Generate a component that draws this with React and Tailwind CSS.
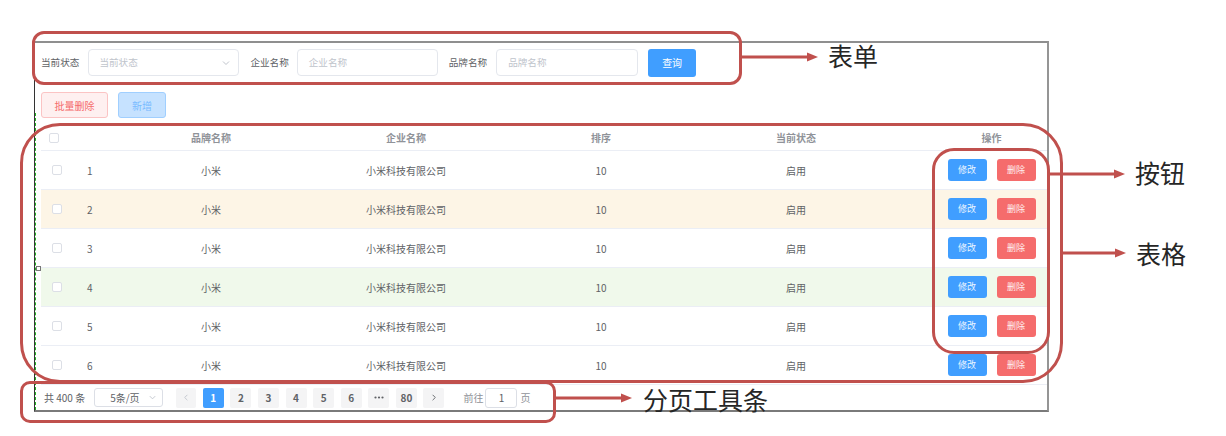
import React from 'react'

const rows = [
  { id: 1, bg: 'bg-white' },
  { id: 2, bg: 'bg-[#fdf5e6]' },
  { id: 3, bg: 'bg-white' },
  { id: 4, bg: 'bg-[#f0f9eb]' },
  { id: 5, bg: 'bg-white' },
  { id: 6, bg: 'bg-white' },
]

const cols = 'grid grid-cols-[32px_40px_196px_194px_196px_194px_1fr]'

function Checkbox() {
  return <span className="block w-[10px] h-[10px] rounded-[2px] border border-[#dcdfe6] bg-white" />
}

function Chevron({ className, d = 'M2 3.5 L5 6.5 L8 3.5' }) {
  return (
    <svg viewBox="0 0 10 10" className={className} fill="none" stroke="currentColor" strokeWidth="1">
      <path d={d} />
    </svg>
  )
}

function Arrow({ className, width }) {
  return (
    <svg className={className} width={width} height="12" viewBox={`0 0 ${width} 12`}>
      <line x1="0" y1="6" x2={width - 9} y2="6" stroke="#c0504d" strokeWidth="3" />
      <path d={`M${width - 11} 1.5 L${width} 6 L${width - 11} 10.5 Z`} fill="#c0504d" />
    </svg>
  )
}

export default function App() {
  return (
    <div className="relative w-[1226px] h-[436px] bg-white overflow-hidden font-['Noto_Sans_CJK_SC',sans-serif]">
      <div className="pt-[41px] pl-[34px]">
        <div className="relative w-[1015px] h-[371px] border-t-2 border-b-2 border-l border-r-2 border-t-[#8f8f8f] border-b-[#7a7a7a] border-l-[#333] border-r-[#959595]">
          {/* left dashed guide */}
          <div className="absolute left-0 top-[70px] bottom-0 border-l border-dashed border-[#22b322]" />
          <div className="absolute left-[1px] top-[223px] w-[5px] h-[5px] border border-[#777] bg-white" />

          <div className="pt-[6px] pl-[6px]">
            {/* form */}
            <div className="flex items-center h-[27px] text-[9.6px] whitespace-nowrap">
              <span className="text-[#606266] shrink-0">当前状态</span>
              <div className="ml-[9px] w-[151px] shrink-0 h-[27px] rounded-[4px] border border-[#e4e7ed] flex items-center justify-between pl-[10px] pr-[7px]">
                <span className="text-[#c0c4cc]">当前状态</span>
                <Chevron className="w-[10px] h-[10px] text-[#c0c4cc]" />
              </div>
              <span className="ml-[11px] text-[#606266] shrink-0">企业名称</span>
              <div className="ml-[8px] w-[141px] shrink-0 h-[27px] rounded-[4px] border border-[#e4e7ed] flex items-center pl-[11px]">
                <span className="text-[#c0c4cc]">企业名称</span>
              </div>
              <span className="ml-[11px] text-[#606266] shrink-0">品牌名称</span>
              <div className="ml-[9px] w-[142px] shrink-0 h-[27px] rounded-[4px] border border-[#e4e7ed] flex items-center pl-[11px]">
                <span className="text-[#c0c4cc]">品牌名称</span>
              </div>
              <button className="ml-[10px] w-[48px] shrink-0 h-[28px] rounded-[3px] bg-[#409eff] text-white text-[10px]">查询</button>
            </div>

            {/* actions */}
            <div className="flex items-center gap-[10px] mt-[16px] h-[26px] text-[10px] whitespace-nowrap">
              <button className="w-[67px] h-[26px] rounded-[3px] border border-[#fbc4c4] bg-[#fef0f0] text-[#f56c6c]">批量删除</button>
              <button className="w-[48px] h-[26px] rounded-[3px] border border-[#a0cfff] bg-[#c6e2ff] text-[#79bbff]">新增</button>
            </div>

            {/* table */}
            <div className="mt-[7px] text-[10px] text-[#606266] whitespace-nowrap">
              <div className={`${cols} h-[26px] items-center border-b border-[#ebeef5] text-[#909399] font-bold`}>
                <div className="pl-[8px]"><Checkbox /></div>
                <div />
                <div className="text-center">品牌名称</div>
                <div className="text-center">企业名称</div>
                <div className="text-center">排序</div>
                <div className="text-center">当前状态</div>
                <div className="text-center pl-[43px]">操作</div>
              </div>
              {rows.map((r) => (
                <div key={r.id} className={`${cols} h-[39px] items-center border-b border-[#ebeef5] ${r.bg}`}>
                  <div className="pl-[11px]"><Checkbox /></div>
                  <div className="pl-[14px]">{r.id}</div>
                  <div className="text-center">小米</div>
                  <div className="text-center">小米科技有限公司</div>
                  <div className="text-center">10</div>
                  <div className="text-center">启用</div>
                  <div className="flex justify-center gap-[10px] pl-[43px] text-[9px]">
                    <button className="w-[39px] h-[22px] rounded-[3px] bg-[#409eff] text-white/90">修改</button>
                    <button className="w-[39px] h-[22px] rounded-[3px] bg-[#f56c6c] text-white/90">删除</button>
                  </div>
                </div>
              ))}
            </div>

            {/* pagination */}
            <div className="flex items-center h-[25px] pl-[3px] text-[10px] text-[#606266] whitespace-nowrap">
              <span className="shrink-0">共 400 条</span>
              <div className="ml-[9px] w-[69px] shrink-0 h-[19px] rounded-[3px] border border-[#dcdfe6] flex items-center justify-between pl-[15px] pr-[5px]">
                <span>5条/页</span>
                <Chevron className="w-[9px] h-[9px] text-[#c0c4cc]" />
              </div>
              <div className="ml-[13px] flex items-center gap-[6.6px] font-bold shrink-0">
                <span className="w-[20px] h-[20px] rounded-[2px] bg-[#f4f4f5] text-[#c0c4cc] flex items-center justify-center">
                  <Chevron className="w-[9px] h-[9px]" d="M6 2 L3 5 L6 8" />
                </span>
                <span className="w-[21px] h-[20px] rounded-[2px] bg-[#409eff] text-white flex items-center justify-center">1</span>
                {['2', '3', '4', '5', '6'].map((p) => (
                  <span key={p} className="w-[21px] h-[20px] rounded-[2px] bg-[#f4f4f5] flex items-center justify-center">{p}</span>
                ))}
                <span className="w-[21px] h-[20px] rounded-[2px] bg-[#f4f4f5] flex items-center justify-center">
                  <svg width="10" height="3" viewBox="0 0 10 3" fill="#606266">
                    <circle cx="1.5" cy="1.5" r="1.1" />
                    <circle cx="5" cy="1.5" r="1.1" />
                    <circle cx="8.5" cy="1.5" r="1.1" />
                  </svg>
                </span>
                <span className="w-[21px] h-[20px] rounded-[2px] bg-[#f4f4f5] flex items-center justify-center">80</span>
                <span className="w-[21px] h-[20px] rounded-[2px] bg-[#f4f4f5] text-[#606266] flex items-center justify-center">
                  <Chevron className="w-[9px] h-[9px]" d="M4 2 L7 5 L4 8" />
                </span>
              </div>
              <span className="ml-[19px] text-[#909399]">前往</span>
              <div className="ml-[2px] w-[32px] shrink-0 h-[20px] rounded-[3px] border border-[#dcdfe6] flex items-center justify-center">1</div>
              <span className="ml-[3px] text-[#909399]">页</span>
            </div>
          </div>
        </div>
      </div>

      {/* annotations */}
      <div className="pointer-events-none">
        <div className="absolute left-[32px] top-[31px] w-[710px] h-[54px] rounded-[12px] border-[3px] border-[#c0504d]" />
        <div className="absolute left-[20px] top-[123px] w-[1043px] h-[260px] rounded-[40px] border-[3px] border-[#c0504d]" />
        <div className="absolute left-[932px] top-[148px] w-[118px] h-[206px] rounded-[22px] border-[3px] border-[#c0504d]" />
        <div className="absolute left-[20px] top-[381px] w-[536px] h-[42px] rounded-[10px] border-[3px] border-[#c0504d]" />

        <Arrow className="absolute left-[741px] top-[51px]" width={77} />
        <Arrow className="absolute left-[1049px] top-[168px]" width={76} />
        <Arrow className="absolute left-[1062px] top-[247px]" width={64} />
        <Arrow className="absolute left-[555px] top-[392px]" width={77} />

        <span className="absolute left-[828px] top-[43px] text-[25px] leading-none text-[#262626]">表单</span>
        <span className="absolute left-[1135px] top-[160px] text-[25px] leading-none text-[#262626]">按钮</span>
        <span className="absolute left-[1136px] top-[241px] text-[25px] leading-none text-[#262626]">表格</span>
        <span className="absolute left-[643px] top-[387px] text-[25px] leading-none text-[#262626]">分页工具条</span>
      </div>
    </div>
  )
}
